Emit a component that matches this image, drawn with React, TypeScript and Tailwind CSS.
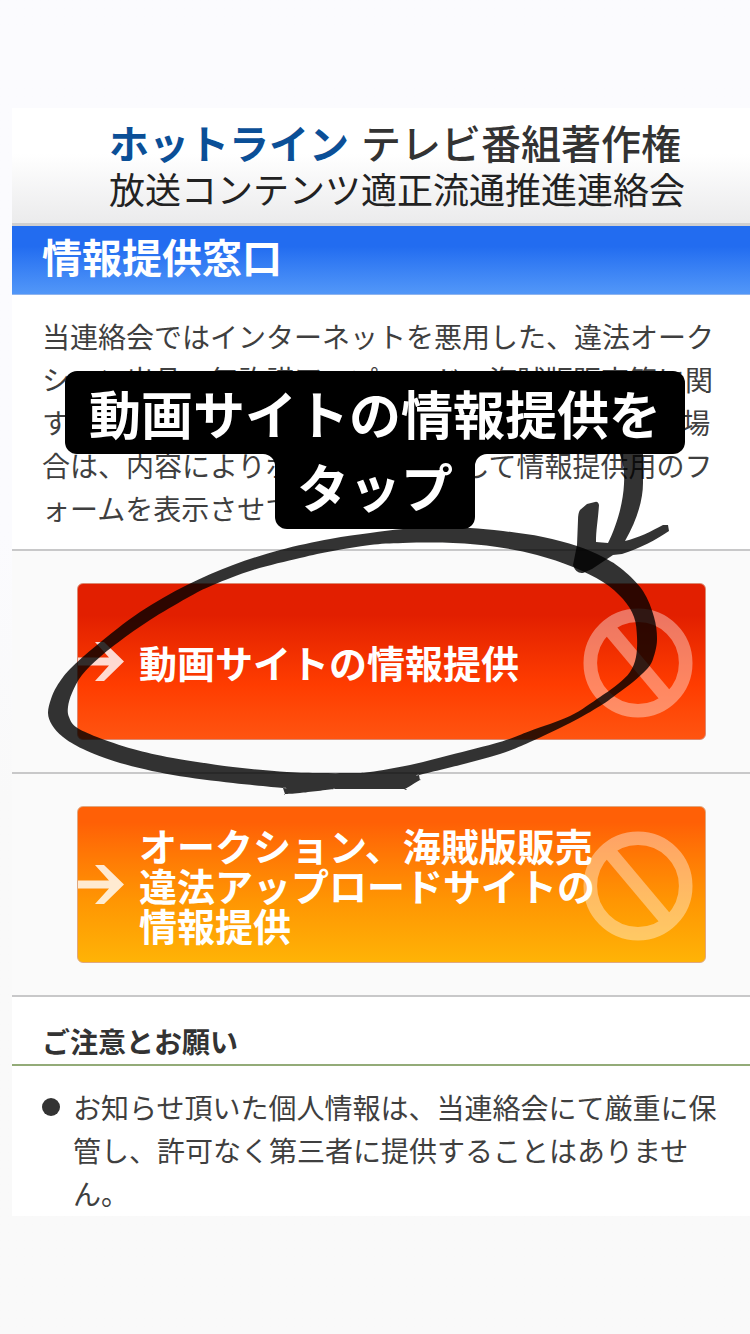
import type { ReactNode } from "react";

type Point = [number, number];

/** Builds a closed, smooth outline through the given points; a repeated point makes a corner. */
function smooth(points: Point[]): string {
  const n = points.length;
  const at = (i: number) => points[(i + n) % n];
  let d = `M${points[0][0]} ${points[0][1]}`;
  for (let i = 0; i < n; i++) {
    const [a, b, c, e] = [at(i - 1), at(i), at(i + 1), at(i + 2)];
    d += `C${b[0] + (c[0] - a[0]) / 6} ${b[1] + (c[1] - a[1]) / 6} ${c[0] - (e[0] - b[0]) / 6} ${
      c[1] - (e[1] - b[1]) / 6
    } ${c[0]} ${c[1]}`;
  }
  return d + "Z";
}

const ringOuter: Point[] = [
  [48, 713], [51, 699], [57, 686], [70, 669], [97, 645], [140, 612], [187, 585], [233, 565], [280, 550],
  [330, 539], [370, 533], [403, 529], [440, 528], [470, 528], [503, 531], [543, 537], [577, 546], [603, 557],
  [623, 570], [643, 591], [654, 617], [657, 640], [653, 659], [647, 669], [633, 682], [617, 694], [600, 706],
  [570, 723], [530, 742], [500, 754], [460, 765], [419, 775], [419, 775], [420, 780], [420, 780], [405, 789],
  [405, 789], [370, 789], [334, 789], [334, 789], [300, 793], [285, 794], [285, 794], [283, 788], [283, 788],
  [233, 783], [173, 775], [120, 763], [83, 749], [63, 737], [52, 725],
];

const ringInner: Point[] = [
  [68, 707], [72, 693], [82, 675], [100, 657], [120, 641], [150, 620], [187, 598], [213, 585], [253, 570],
  [300, 558], [333, 551], [370, 545], [403, 543], [453, 543], [497, 547], [537, 555], [573, 567], [603, 582],
  [623, 599], [634, 617], [637, 637], [636, 657], [630, 672], [618, 684], [600, 697], [570, 716], [530, 731],
  [500, 742], [450, 755], [410, 765], [370, 772], [350, 773], [320, 773], [287, 772], [233, 767], [173, 758],
  [133, 749], [97, 737], [76, 727], [69, 717],
];

const arrowPath =
  "M612 440C622 455 625 466 624 484C623 505 616 527 608 543L596 542C596 530 598 520 599 505Q598 501 595 502L587 504L580 510Q578 513 578 520L577 545L573 565Q576 574 583 573L592 569L613 555L622 554C640 548 656 540 669 531L668 525L663 525C652 531 638 538 625 541C637 520 643 500 643 483V440Z";

function Scribble() {
  return (
    <svg
      aria-hidden="true"
      className="pointer-events-none absolute top-0 left-0 h-[1334px] w-[750px]"
      viewBox="0 0 750 1334"
      fill="#000"
      fillOpacity="0.8"
    >
      <path fillRule="evenodd" d={smooth(ringOuter) + smooth(ringInner)} />
      <path d={arrowPath} />
    </svg>
  );
}

function InnerCorner({ className }: { className: string }) {
  return (
    <svg aria-hidden="true" viewBox="0 0 12 12" className={`absolute top-0 size-3 ${className}`}>
      <path d="M0 0H12V12A12 12 0 0 0 0 0Z" fill="#000" />
    </svg>
  );
}

function Caption() {
  return (
    <p className="absolute inset-x-0 top-[371px] flex flex-col items-center text-[52px] font-bold text-white">
      <span className="rounded-xl bg-black px-6 leading-[83px]">動画サイトの情報提供を</span>
      <span className="relative rounded-b-xl bg-black px-[22px] pb-3 leading-[63px]">
        <InnerCorner className="right-full" />
        タップ
        <InnerCorner className="left-full -scale-x-100" />
      </span>
    </p>
  );
}

function ReportLink({ tone, children }: { tone: string; children: ReactNode }) {
  return (
    <div className="border-t-2 border-[#c8c8c9] bg-[#fafafa] py-8 pr-11 pl-[65px]">
      <a
        href="#report"
        className={`relative flex h-[157px] items-center gap-[15px] rounded-md border text-[38px] leading-10 font-bold text-white ${tone}`}
      >
        <svg aria-hidden="true" viewBox="0 0 46 39" className="h-[39px] w-[46px] shrink-0" fill="#fff" fillOpacity="0.82">
          <path d="M0 15.5H31L17 0H26L46 19.5L26 39H17L31 23.5H0Z" />
        </svg>
        <svg
          aria-hidden="true"
          viewBox="0 0 110 110"
          className="absolute top-6 right-3 size-[110px]"
          fill="none"
          stroke="#fff"
          opacity="0.38"
        >
          <circle cx="55" cy="55" r="47.7" strokeWidth="13.6" />
          <path d="M27.7 22.6L82.3 87.4" strokeWidth="14" />
        </svg>
        <span className="relative">{children}</span>
      </a>
    </div>
  );
}

export default function App() {
  return (
    <div
      lang="ja"
      className="relative min-h-screen bg-[#fafafa] bg-linear-to-b from-[#fbfbfe] from-40% to-[#f9f9f9] to-60% pt-[108px] pl-3 font-['Noto_Sans_CJK_JP',sans-serif] text-[#3f3f3f]"
    >
      <main className="bg-white">
        <header className="flex h-[118px] flex-col items-center border-b-3 border-[#cfcfd0] bg-linear-to-b from-white from-40% to-[#ebebec] pt-[10px] pl-8">
          <div className="text-[#333]">
            <h1 className="flex gap-3 text-[40px] leading-12 font-medium">
              <span className="font-bold text-[#0b4f97]">ホットライン</span>
              <span>テレビ番組著作権</span>
            </h1>
            <p className="text-4xl leading-11 font-normal text-[#222]">放送コンテンツ適正流通推進連絡会</p>
          </div>
        </header>

        <h2 className="border-b border-[#8fb4ee] bg-linear-to-b from-[#226cf0] from-30% to-[#5297f8] pb-2 pl-[30px] text-[40px] leading-[60px] font-bold text-white">
          情報提供窓口
        </h2>

        <p className="pt-5 pr-[30px] pb-[19px] pl-[30px] text-[28px] leading-[43px]">
          当連絡会ではインターネットを悪用した、違法オークション出品、無許諾アップロード、海賊版販売等に関する情報を受け付けております。情報を提供頂ける場合は、内容によりボタンをタップして情報提供用のフォームを表示させてください。
        </p>

        <nav className="border-b-2 border-[#c8c8c9]">
          <ReportLink tone="border-[#dc8a72] bg-linear-to-b from-[#e21f00] from-20% via-[#ff3c00] via-65% to-[#ff5410]">
            動画サイトの情報提供
          </ReportLink>
          <ReportLink tone="border-[#e0a880] bg-linear-to-b from-[#ff6006] from-10% via-[#ff9503] via-60% to-[#ffb306]">
            オークション、海賊版販売
            <br />
            違法アップロードサイトの
            <br />
            情報提供
          </ReportLink>
        </nav>

        <section>
          <h3 className="border-b-2 border-[#93ab78] pt-6 pb-[3px] pl-[30px] text-[28px] leading-10 font-bold text-[#333]">
            ご注意とお願い
          </h3>
          <ul className="pt-5 pr-5 pb-px pl-[30px] text-[28px] leading-[43px]">
            <li className="flex gap-[13px]">
              <span aria-hidden="true" className="mt-3 size-[18px] shrink-0 rounded-full bg-[#333]" />
              <span>
                お知らせ頂いた個人情報は、当連絡会にて厳重に保管し、許可なく第三者に提供することはありません。
              </span>
            </li>
          </ul>
        </section>
      </main>

      <Scribble />
      <Caption />
    </div>
  );
}
